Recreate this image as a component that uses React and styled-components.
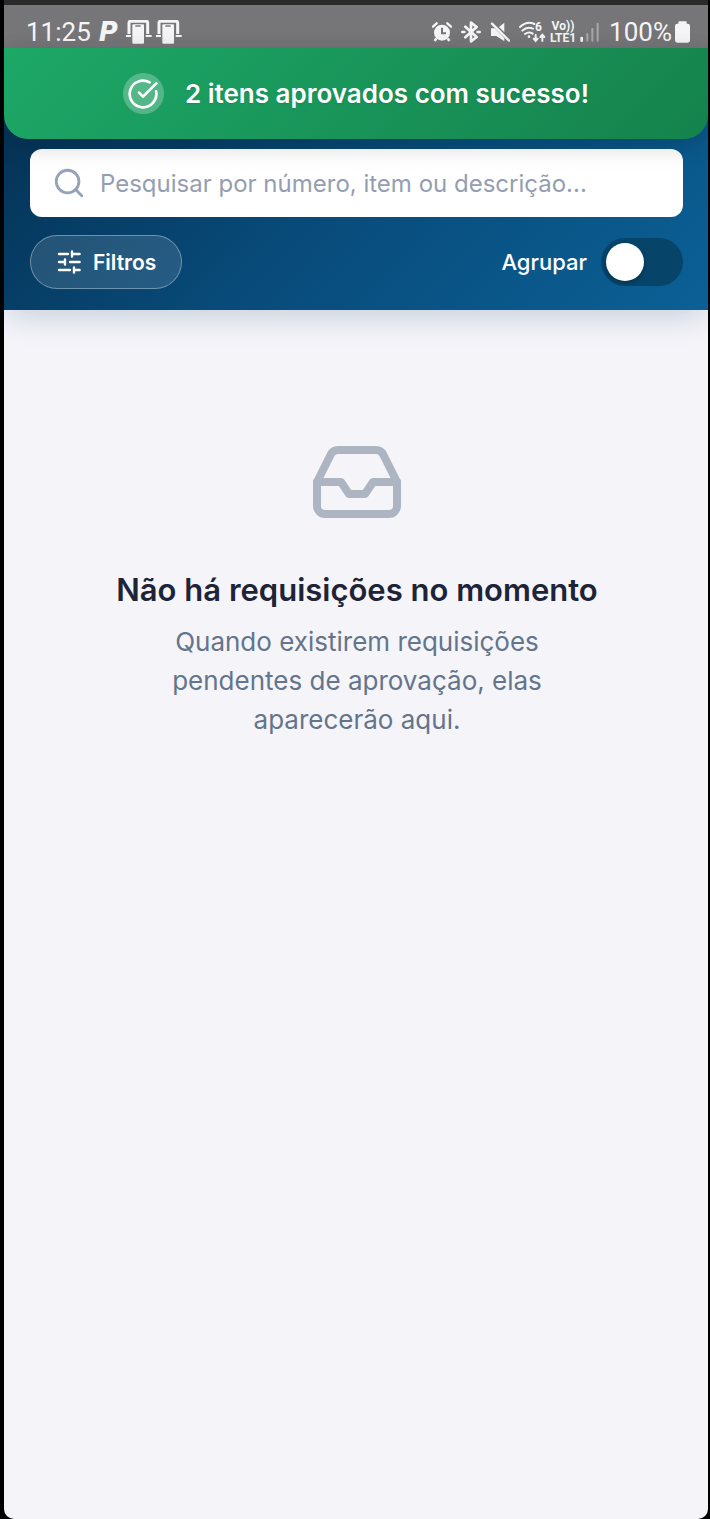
import React, { Component } from 'react'
import styled, { createGlobalStyle } from 'styled-components'
import { CircleCheckBig, Inbox, Search } from 'lucide-react'

const GlobalStyle = createGlobalStyle`
  * {
    box-sizing: border-box;
  }

  body {
    margin: 0;
    background: #000;
    font-family: Inter, 'Liberation Sans', sans-serif;
  }
`

const Screen = styled.div`
  display: flex;
  flex-direction: column;
  min-height: 100vh;
  margin: 0 2px 0 4px;
  background: #f4f4f9;
  border-radius: 0 0 10px 10px;
`

const StatusBar = styled.div`
  display: flex;
  justify-content: space-between;
  align-items: center;
  height: 48px;
  padding: 10px 18px 0 22px;
  border-top: 5px solid #2a2a2a;
  background: #767678;
  color: #f5f5f7;
  font-family: Roboto, 'Liberation Sans', sans-serif;
`

const StatusGroup = styled.div`
  display: flex;
  align-items: center;
  gap: ${props => props.gap};

  svg {
    display: block;
    flex: none;
  }
`

const StatusText = styled.span`
  font-size: 26px;
  line-height: 30px;
`

const AppMark = styled.span`
  font: italic 700 26px/30px 'DejaVu Sans', sans-serif;
`

const Carrier = styled.span`
  display: flex;
  flex-direction: column;
  align-items: center;
  font-size: 12px;
  font-weight: 700;
  line-height: 12px;
`

const Header = styled.header`
  position: relative;
  display: flex;
  flex-direction: column;
  gap: 18px;
  padding: 101px 25px 21px 26px;
  background: linear-gradient(135deg, #042f50 0%, #084b7a 50%, #0b6096 100%);
  box-shadow: 0 10px 30px -6px rgba(8, 50, 90, 0.22);
`

const Toast = styled.div`
  position: absolute;
  top: 0;
  left: 0;
  right: 0;
  display: flex;
  align-items: center;
  justify-content: center;
  gap: 21px;
  height: 91px;
  border-radius: 0 0 24px 24px;
  background: linear-gradient(135deg, #1da868 0%, #15824c 100%);
  box-shadow: 0 8px 24px rgba(0, 0, 0, 0.16);
  color: #fff;
  font-size: 26px;
  font-weight: 600;
  text-shadow: 0 1px 2px rgba(0, 0, 0, 0.1);
`

const ToastBadge = styled.span`
  display: flex;
  align-items: center;
  justify-content: center;
  width: 41px;
  height: 41px;
  border-radius: 50%;
  background: rgba(255, 255, 255, 0.25);
`

const SearchBox = styled.label`
  display: flex;
  align-items: center;
  gap: 14px;
  height: 68px;
  padding: 0 22px;
  border-radius: 12px;
  background: #fff;
  color: #94a3b8;
`

const SearchInput = styled.input`
  flex: 1;
  min-width: 0;
  padding: 0;
  border: none;
  outline: none;
  background: transparent;
  color: #1e293b;
  font: 400 24px Inter, sans-serif;

  &::placeholder {
    color: #949eb0;
    opacity: 1;
  }
`

const Toolbar = styled.div`
  display: flex;
  align-items: center;
  justify-content: space-between;
`

const FilterButton = styled.button`
  display: flex;
  align-items: center;
  gap: 12px;
  height: 54px;
  padding: 0 25px 0 26px;
  border: 1px solid rgba(255, 255, 255, 0.35);
  border-radius: 27px;
  background: rgba(255, 255, 255, 0.12);
  color: #fff;
  font: 600 21px Inter, sans-serif;
  cursor: pointer;
`

const GroupLabel = styled.label`
  display: flex;
  align-items: center;
  gap: 14px;
  color: #fff;
  font-size: 22px;
  font-weight: 500;
`

const Toggle = styled.input`
  appearance: none;
  display: flex;
  align-items: center;
  width: 82px;
  height: 48px;
  margin: 0;
  padding: 0 5px;
  border-radius: 24px;
  background: #06446a;
  cursor: pointer;

  &::before {
    content: '';
    width: 38px;
    height: 38px;
    border-radius: 50%;
    background: #fff;
    box-shadow: 0 2px 4px rgba(0, 0, 0, 0.25);
  }

  &:checked {
    justify-content: flex-end;
  }
`

const EmptyState = styled.main`
  display: flex;
  flex-direction: column;
  align-items: center;
  padding: 124px 24px 124px 26px;
  text-align: center;
`

const EmptyTitle = styled.h1`
  margin: 40px 0 12px;
  color: #1e2438;
  font-size: 31px;
  font-weight: 600;
  line-height: 40px;
`

const EmptyText = styled.p`
  max-width: 420px;
  margin: 0;
  color: #64748b;
  font-size: 26px;
  line-height: 39px;
`

const DeviceIcon = () => (
  <svg width='26' height='24' viewBox='0 0 78 72' fill='none'>
    <path d='M9 42V8q0-4 4-4h48q4 0 4 4v34' stroke='currentColor' strokeWidth='9' />
    <path d='M0 48h15M59 48h18' stroke='currentColor' strokeWidth='6' />
    <rect x='19' y='13' width='35' height='58' rx='3' fill='currentColor' />
    <path d='M28 18h16' stroke='#9a9a9c' strokeWidth='6' />
  </svg>
)

const AlarmIcon = () => (
  <svg width='20' height='20' viewBox='0 0 60 60' fill='none'>
    <circle cx='30' cy='32' r='24' fill='currentColor' />
    <path d='M13 49l-5 8M47 49l5 8' stroke='currentColor' strokeWidth='8' />
    <path d='M3 14L14 4M57 14L46 4' stroke='currentColor' strokeWidth='7' strokeLinecap='round' />
    <path d='M30 17v17h12' stroke='#767678' strokeWidth='6' />
  </svg>
)

const BluetoothIcon = () => (
  <svg width='20' height='22' viewBox='0 0 60 66' fill='none' stroke='currentColor' strokeWidth='8'>
    <path d='M13 17l34 31-17 13V5l17 13-34 31' strokeLinejoin='round' strokeLinecap='round' />
    <path d='M4 33h6M50 33h6' strokeLinecap='round' />
  </svg>
)

const MuteIcon = () => (
  <svg width='20' height='20' viewBox='0 0 60 60' fill='currentColor'>
    <path d='M43 2v29L27 15z' />
    <path d='M3 19h11l29 29v10L19 42H3z' />
    <path d='M6 5l51 51' stroke='currentColor' strokeWidth='7' strokeLinecap='round' />
  </svg>
)

const WifiIcon = () => (
  <svg width='27' height='30' viewBox='0 -12 81 90' fill='none' stroke='currentColor' strokeWidth='6' strokeLinecap='round'>
    <path d='M3 18Q24-2 46 9M10 29Q24 15 42 23M18 39q12-9 23-1' />
    <circle cx='30' cy='47' r='4' fill='currentColor' stroke='none' />
    <path d='M50 42v17M44 53l6 7 6-7M70 60V42M64 48l6-7 6 7' />
    <text x='48' y='30' fill='currentColor' stroke='none' fontFamily='Roboto, sans-serif' fontSize='36' fontWeight='700'>6</text>
  </svg>
)

const SignalIcon = () => (
  <svg width='20' height='20' viewBox='0 0 60 60' stroke='currentColor' strokeWidth='6' strokeLinecap='round'>
    <path d='M5 48v8' strokeWidth='8' />
    <path d='M22 36v20M37 21v35M53 5v51' opacity='0.4' />
  </svg>
)

const BatteryIcon = () => (
  <svg width='15' height='22' viewBox='0 0 45 66' fill='currentColor'>
    <path d='M13 1h19q3 0 3 3v4h3q7 0 7 7v43q0 7-7 7H7q-7 0-7-7V15q0-7 7-7h3V4q0-3 3-3z' />
  </svg>
)

const SlidersIcon = () => (
  <svg width='24' height='24' viewBox='0 0 24 24' fill='none' stroke='currentColor' strokeWidth='2.4' strokeLinecap='round'>
    <path d='M2 4h9M15 4h7.6M15 1.4v5.2M2 12h6M8 9.4v5.2M13 12h9.6M2 20h11M17 20h5.6M17 17.4v5.2' />
  </svg>
)

class App extends Component {
  constructor (props) {
    super(props)
    this.state = { query: '', grouped: false }
  }

  handleQuery = e => {
    this.setState({ query: e.target.value })
  }

  handleGroup = e => {
    this.setState({ grouped: e.target.checked })
  }

  render () {
    const { query, grouped } = this.state
    return (
      <Screen>
        <GlobalStyle />
        <StatusBar>
          <StatusGroup gap='8px'>
            <StatusText>11:25</StatusText>
            <AppMark>P</AppMark>
            <StatusGroup gap='4px'>
              <DeviceIcon />
              <DeviceIcon />
            </StatusGroup>
          </StatusGroup>
          <StatusGroup gap='9px'>
            <AlarmIcon />
            <BluetoothIcon />
            <MuteIcon />
            <StatusGroup gap='4px'>
              <WifiIcon />
              <Carrier>
                <span>Vo))</span>
                <span>LTE1</span>
              </Carrier>
              <SignalIcon />
            </StatusGroup>
            <StatusGroup gap='3px'>
              <StatusText>100%</StatusText>
              <BatteryIcon />
            </StatusGroup>
          </StatusGroup>
        </StatusBar>
        <Header>
          <SearchBox>
            <Search size={34} strokeWidth={2} />
            <SearchInput
              type='text'
              aria-label='Pesquisar'
              placeholder='Pesquisar por número, item ou descrição...'
              value={query}
              onChange={this.handleQuery}
            />
          </SearchBox>
          <Toolbar>
            <FilterButton type='button'>
              <SlidersIcon />
              Filtros
            </FilterButton>
            <GroupLabel>
              Agrupar
              <Toggle type='checkbox' role='switch' checked={grouped} onChange={this.handleGroup} />
            </GroupLabel>
          </Toolbar>
          <Toast role='status'>
            <ToastBadge>
              <CircleCheckBig size={32} strokeWidth={2} />
            </ToastBadge>
            2 itens aprovados com sucesso!
          </Toast>
        </Header>
        <EmptyState>
          <Inbox size={96} strokeWidth={2} color='#acb5c1' />
          <EmptyTitle>Não há requisições no momento</EmptyTitle>
          <EmptyText>Quando existirem requisições pendentes de aprovação, elas aparecerão aqui.</EmptyText>
        </EmptyState>
      </Screen>
    )
  }
}

export default App
